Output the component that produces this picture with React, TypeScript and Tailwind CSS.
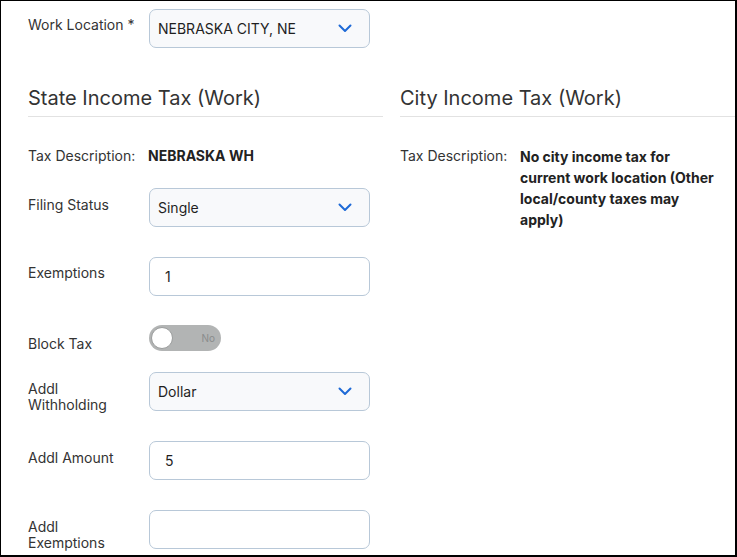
import React from "react";

const font = { fontFamily: "Inter, 'Noto Sans', sans-serif" };

function Chevron() {
  return (
    <svg width="14" height="9" viewBox="0 0 14 9" fill="none">
      <path d="M1.5 1.5 L7 7 L12.5 1.5" stroke="#1e6ad6" strokeWidth="2" strokeLinecap="round" strokeLinejoin="round" />
    </svg>
  );
}

function Select({ value }: { value: string }) {
  return (
    <div className="flex h-[39px] w-[221px] items-center justify-between rounded-[7px] border border-[#b8c8d8] bg-[#f8f9fb] pl-[8px] pr-[17px] text-[14px] text-[#1f1f1f]">
      <span>{value}</span>
      <Chevron />
    </div>
  );
}

function TextInput({ value }: { value: string }) {
  return (
    <div className="flex h-[39px] w-[221px] items-center rounded-[7px] border border-[#b8c8d8] bg-white pl-[15px] text-[14px] text-[#1f1f1f]">
      {value}
    </div>
  );
}

function Label({ children, pt = "pt-[9px]" }: { children: React.ReactNode; pt?: string }) {
  return (
    <div className={`w-[121px] shrink-0 pr-[13px] text-[14px] leading-4 text-[#333] ${pt}`}>{children}</div>
  );
}

function Heading({ children, lineWidth }: { children: React.ReactNode; lineWidth: string }) {
  return (
    <div className={`${lineWidth} border-b border-[#e2e2e2] pb-[4px] text-[20px] leading-[28px] text-[#333]`}>{children}</div>
  );
}

export default function App() {
  return (
    <div style={font} className="h-[557px] w-[737px] overflow-hidden border-t border-l border-r-2 border-b-2 border-black bg-white">
      <div className="pl-[27px] pt-[8px]">
        <div className="flex h-[39px]">
          <Label pt="pt-[8px]">Work Location *</Label>
          <Select value="NEBRASKA CITY, NE" />
        </div>

        <div className="mt-[36px] flex gap-[17px]">
          <div className="w-[355px] shrink-0">
            <Heading lineWidth="w-[355px]">State Income Tax (Work)</Heading>
            <div className="mt-[29px] flex text-[14px] leading-5">
              <div className="w-[120px] shrink-0 text-[#333]">Tax Description:</div>
              <div className="font-bold text-[#222]">NEBRASKA WH</div>
            </div>

            <div className="mt-[22px] flex h-[39px]">
              <Label>Filing Status</Label>
              <Select value="Single" />
            </div>
            <div className="mt-[30px] flex h-[39px]">
              <Label pt="pt-[8px]">Exemptions</Label>
              <TextInput value="1" />
            </div>
            <div className="mt-[29px] flex h-[47px]">
              <Label pt="pt-[11px]">Block Tax</Label>
              <div className="relative h-[26px] w-[72px] rounded-full bg-[#b2b4b4]">
                <div className="absolute left-[2px] top-[2px] h-[22px] w-[22px] rounded-full border border-[#9a9c9c] bg-white" />
                <span className="absolute right-[6px] top-0 text-[10px] leading-[26px] text-[#8a8c8c]">No</span>
              </div>
            </div>
            <div className="flex h-[39px]">
              <Label>Addl Withholding</Label>
              <Select value="Dollar" />
            </div>
            <div className="mt-[30px] flex h-[39px]">
              <Label>Addl Amount</Label>
              <TextInput value="5" />
            </div>
            <div className="mt-[30px] flex h-[39px]">
              <Label>Addl Exemptions</Label>
              <TextInput value="" />
            </div>
          </div>

          <div className="w-[354px] shrink-0">
            <Heading lineWidth="w-[354px]">City Income Tax (Work)</Heading>
            <div className="mt-[29px] flex text-[14px]">
              <div className="w-[120px] shrink-0 leading-5 text-[#333]">Tax Description:</div>
              <div className="w-[200px] font-bold leading-[21px] text-[#222]">
                No city income tax for current work location (Other local/county taxes may apply)
              </div>
            </div>
          </div>
        </div>
      </div>
    </div>
  );
}
